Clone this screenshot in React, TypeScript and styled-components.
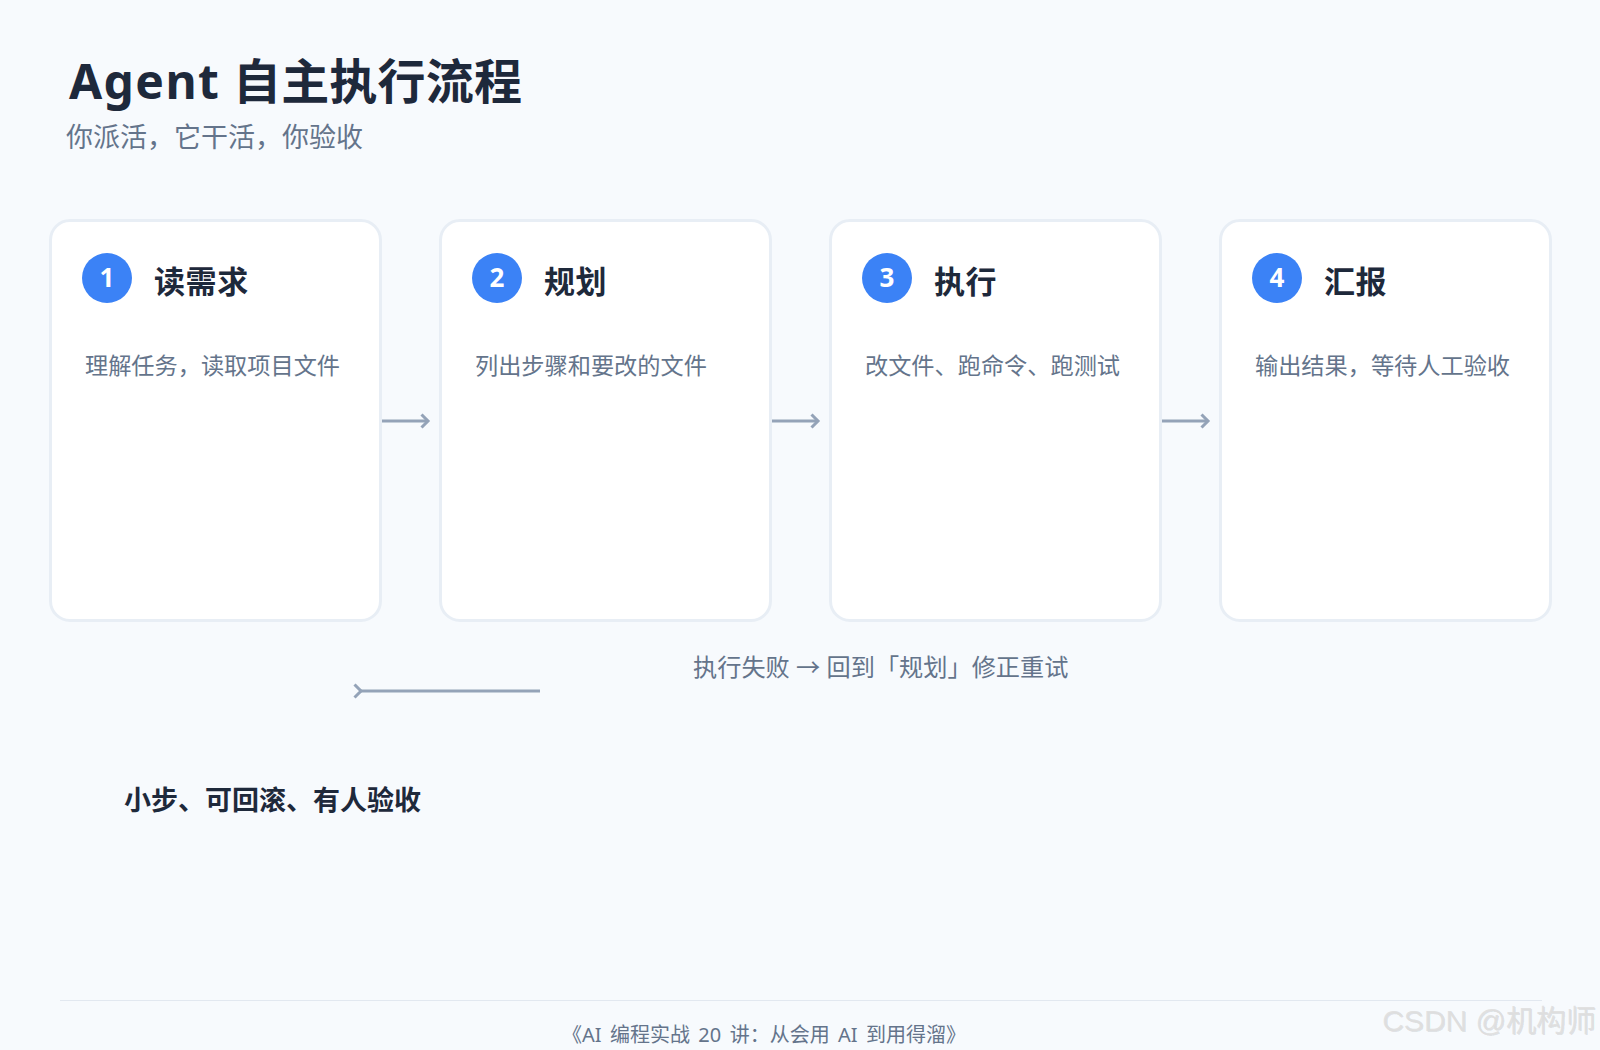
import styled, { createGlobalStyle } from 'styled-components';

const steps = [
  { title: '读需求', text: '理解任务，读取项目文件' },
  { title: '规划', text: '列出步骤和要改的文件' },
  { title: '执行', text: '改文件、跑命令、跑测试' },
  { title: '汇报', text: '输出结果，等待人工验收' },
];

function App() {
  return (
    <Page>
      <GlobalStyle />
      <Header>
        <Title>
          <LatinWord>Agent</LatinWord> 自主执行流程
        </Title>
        <Subtitle>你派活，它干活，你验收</Subtitle>
      </Header>
      <Flow>
        {steps.map((step, i) => (
          <StepGroup key={step.title}>
            {i > 0 && (
              <ArrowIcon width="57" height="20" viewBox="0 0 57 20">
                <path d="M0 10H45.5" />
                <path d="M39.5 3.5L46 10L39.5 16.5" />
              </ArrowIcon>
            )}
            <Card>
              <CardHead>
                <Badge>{i + 1}</Badge>
                <StepTitle>{step.title}</StepTitle>
              </CardHead>
              <StepText>{step.text}</StepText>
            </Card>
          </StepGroup>
        ))}
      </Flow>
      <LoopRow>
        <LoopArrow width="190" height="20" viewBox="0 0 190 20">
          <path d="M188 10H9" />
          <path d="M2.5 3.5L9 10L2.5 16.5" />
        </LoopArrow>
        <LoopNote>执行失败 → 回到「规划」修正重试</LoopNote>
      </LoopRow>
      <Summary>小步、可回滚、有人验收</Summary>
      <Footer>《AI 编程实战 20 讲：从会用 AI 到用得溜》</Footer>
      <Watermark>CSDN @机构师</Watermark>
    </Page>
  );
}

const GlobalStyle = createGlobalStyle`
  html, body {
    margin: 0;
    padding: 0;
    background: #f7fafd;
  }
`;

const Page = styled.div`
  position: relative;
  box-sizing: border-box;
  width: 1600px;
  height: 1050px;
  padding: 49px 48px 0 49px;
  overflow: hidden;
  background: #f7fafd;
  font-family: 'Noto Sans', 'Noto Sans CJK SC', sans-serif;
`;

const Header = styled.header`
  padding-left: 20px;
  height: 170px;
`;

const Title = styled.h1`
  margin: 0;
  font-size: 48px;
  line-height: 64px;
  font-weight: 700;
  letter-spacing: 0.2px;
  color: #1e293b;
`;

const LatinWord = styled.span`
  letter-spacing: 1.4px;
`;

const Subtitle = styled.p`
  margin: 4px 0 0 -3px;
  font-size: 27px;
  line-height: 40px;
  color: #64748b;
`;

const Flow = styled.section`
  display: flex;
`;

const StepGroup = styled.div`
  display: flex;
  align-items: center;
`;

const ArrowIcon = styled.svg`
  flex-shrink: 0;
  fill: none;
  stroke: #94a3b8;
  stroke-width: 3;
`;

const Card = styled.article`
  box-sizing: border-box;
  width: 333px;
  height: 403px;
  padding: 31px 31px 31px 30px;
  background: #fff;
  border: 3px solid #e8eef5;
  border-radius: 21px;
`;

const CardHead = styled.div`
  display: flex;
  align-items: flex-start;
  gap: 22px;
`;

const Badge = styled.span`
  display: flex;
  align-items: center;
  justify-content: center;
  box-sizing: border-box;
  width: 50px;
  height: 50px;
  padding-bottom: 2px;
  border-radius: 50%;
  background: #3b82f6;
  color: #fff;
  font-size: 26px;
  font-weight: 700;
`;

const StepTitle = styled.h2`
  margin: 6px 0 0;
  font-size: 31px;
  line-height: 44px;
  font-weight: 700;
  letter-spacing: 0.6px;
  color: #1e293b;
`;

const StepText = styled.p`
  margin: 45px 0 0 3px;
  font-size: 23.2px;
  line-height: 34px;
  white-space: nowrap;
  color: #64748b;
`;

const LoopRow = styled.div`
  display: flex;
  align-items: flex-start;
  padding: 27px 0 0 303px;
  height: 90px;
`;

const LoopArrow = styled(ArrowIcon)`
  margin-top: 32px;
`;

const LoopNote = styled.p`
  margin: 0 0 0 151px;
  font-size: 24.2px;
  line-height: 36px;
  color: #64748b;
`;

const Summary = styled.p`
  margin: 41px 0 0 75px;
  font-size: 27px;
  line-height: 40px;
  font-weight: 700;
  color: #1e293b;
`;

const Footer = styled.footer`
  margin: 180px 10px 0 11px;
  padding: 19px 74px 0 0;
  border-top: 1px solid #e2e8f0;
  text-align: center;
  font-size: 20px;
  line-height: 30px;
  word-spacing: 3.2px;
  color: #64748b;
`;

const Watermark = styled.span`
  position: absolute;
  right: 4px;
  bottom: 10px;
  font-family: 'Liberation Sans', 'Noto Sans CJK SC', sans-serif;
  font-size: 30px;
  color: rgba(222, 222, 222, 0.9);
  text-shadow: 1px 1px 0 rgba(0, 0, 0, 0.1);
`;

export default App;
